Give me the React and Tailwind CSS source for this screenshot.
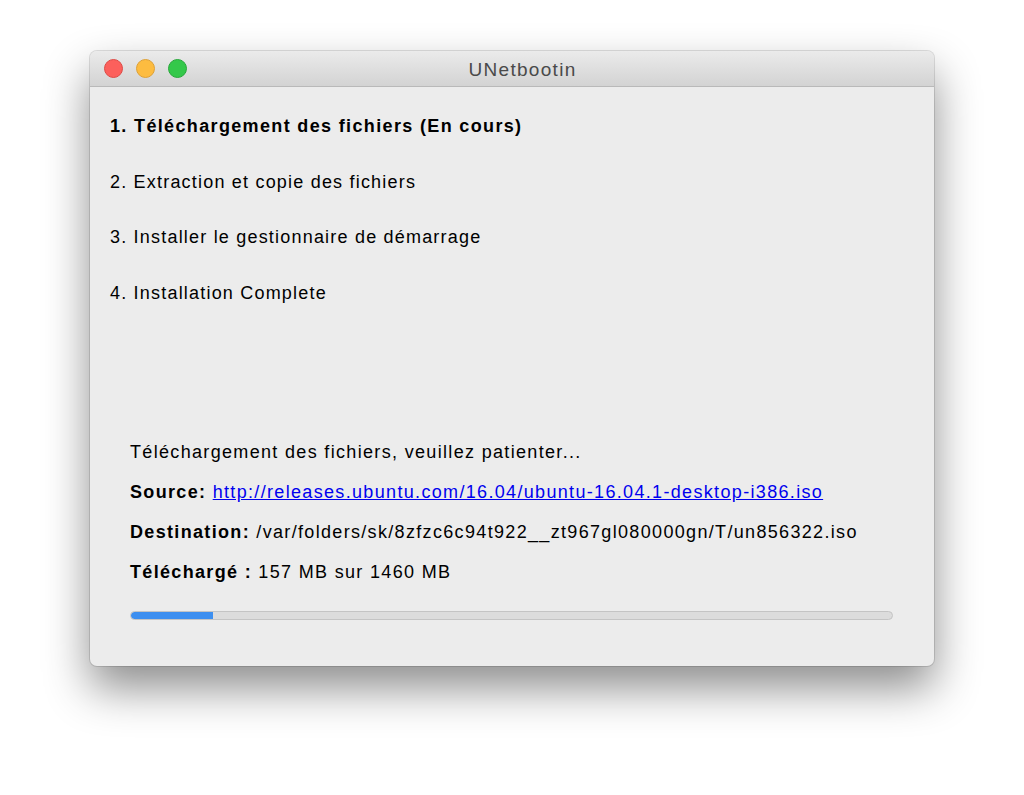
import React from 'react';

const steps = [
  { text: '1. Téléchargement des fichiers (En cours)', bold: true },
  { text: '2. Extraction et copie des fichiers' },
  { text: '3. Installer le gestionnaire de démarrage' },
  { text: '4. Installation Complete' },
];

const App = () => {
  const downloaded = 157;
  const total = 1460;
  const pct = (downloaded / total) * 100;

  return (
    <div className="w-[1024px] h-[795px] bg-white overflow-hidden" style={{ fontFamily: '"Liberation Sans", Arial, sans-serif' }}>
      <div className="pt-[51px] pl-[90px]">
        <div className="w-[844px] h-[615px] rounded-[7px] bg-[#ececec] flex flex-col overflow-hidden shadow-[0_22px_45px_rgba(0,0,0,0.45),0_0_0_1px_rgba(0,0,0,0.12)]">
          {/* ── Title bar ── */}
          <div className="relative h-[36px] flex items-center border-b border-[#b9b9b9] bg-gradient-to-b from-[#ebebeb] to-[#d3d3d3]">
            <div className="flex items-center gap-[13px] pl-[14px]">
              <span className="w-[19px] h-[19px] rounded-full bg-[#fc605c] border border-[#de4a45]" />
              <span className="w-[19px] h-[19px] rounded-full bg-[#fdbc40] border border-[#dea136]" />
              <span className="w-[19px] h-[19px] rounded-full bg-[#34c84a] border border-[#27a83a]" />
            </div>
            <div className="absolute inset-0 pt-[3px] pl-[21px] flex items-center justify-center text-[19px] tracking-[1.3px] text-[#4a4a4a] pointer-events-none">
              UNetbootin
            </div>
          </div>

          {/* ── Steps ── */}
          <div className="pl-[20px] pt-[29px] flex flex-col gap-[34.5px]">
            {steps.map((s) => (
              <p
                key={s.text}
                className={`text-[18px] leading-[21px] text-black ${s.bold ? 'font-bold tracking-[1.35px]' : 'tracking-[1.2px]'}`}
              >
                {s.text}
              </p>
            ))}
          </div>

          {/* ── Progress info ── */}
          <div className="mt-auto pl-[40px] pr-[41px] pb-[46px]">
            <div className="flex flex-col gap-[19px] text-[18px] leading-[21px] tracking-[1.33px] text-black">
              <p>Téléchargement des fichiers, veuillez patienter...</p>
              <p>
                <span className="font-bold">Source:</span>{' '}
                <span className="text-[#0000ee] underline">http://releases.ubuntu.com/16.04/ubuntu-16.04.1-desktop-i386.iso</span>
              </p>
              <p>
                <span className="font-bold">Destination:</span> /var/folders/sk/8zfzc6c94t922__zt967gl080000gn/T/un856322.iso
              </p>
              <p>
                <span className="font-bold">Téléchargé :</span> {downloaded} MB sur {total} MB
              </p>
            </div>
            <div className="mt-[28px] h-[9px] rounded-full bg-[#dcdcdc] border border-[#c4c4c4] overflow-hidden">
              <div className="h-full bg-[#3d8ff0] rounded-l-full" style={{ width: `${pct}%` }} />
            </div>
          </div>
        </div>
      </div>
    </div>
  );
};

export default App;
